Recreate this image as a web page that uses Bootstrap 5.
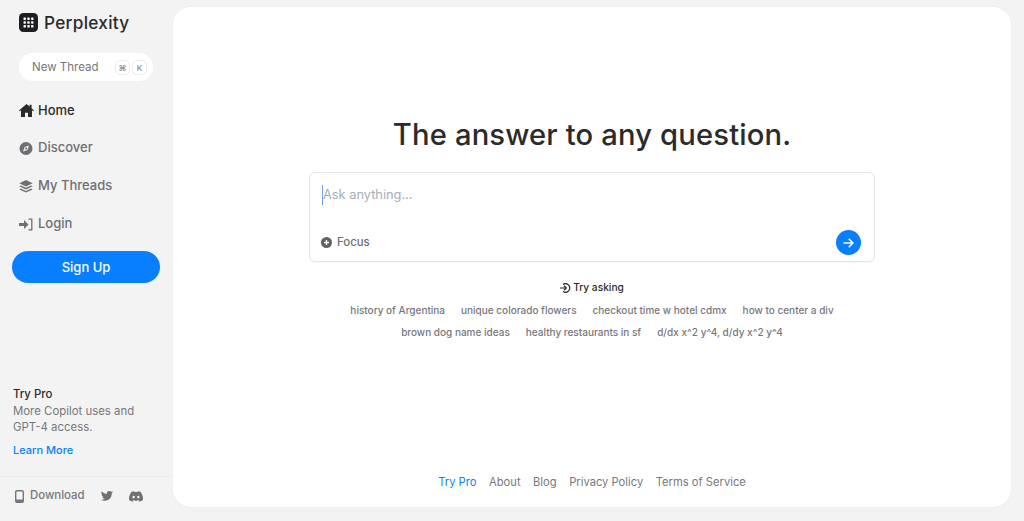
<!DOCTYPE html>
<html lang="en">
<head>
<meta charset="utf-8">
<title>Perplexity</title>
<link rel="stylesheet" href="https://cdn.jsdelivr.net/npm/bootstrap@5.3.0/dist/css/bootstrap.min.css">
<style>
html,body{height:521px;overflow:hidden}
body{background:#f3f3f3;font-family:Inter,"Noto Sans",sans-serif;color:#2b2b2b}
.shell{height:521px}
.side{width:173px;height:521px;flex:none}
.brand{height:33px;margin:6px 0 0 19px;gap:6px;font-size:17.2px;font-weight:500;color:#2a2a2a;letter-spacing:.3px}
.pill{margin:14px 0 0 19px;width:134px;height:28px;border-radius:14px;background:#fff;padding:1px 6px 0 13px;font-size:11.5px;color:#77777b}
.kbd{width:15px;height:15px;border:1px solid #ececec;border-radius:5px;font-size:8px;color:#77777b;margin-left:2px}
.navi{margin:10px 0 0 19px;gap:0}
.navi a{height:38px;gap:4px;font-size:13px;font-weight:500;color:#6f6f74;text-decoration:none}
.navi a.on{color:#2b2b2b;padding-top:1px}
.signup{margin:8px 0 0 12px;width:148px;height:32px;border-radius:16px;background:#087fff;border:0;color:#fff;font-size:13px;font-weight:500;padding:1px 0 0}
.pro{margin:auto 0 0 13px;font-size:11.4px;line-height:16px;color:#77777b}
.pro b{display:block;font-weight:500;color:#2b2b2b;margin-bottom:1px}
.pro a{display:block;margin-top:7px;font-size:11px;color:#087fff;font-weight:500;text-decoration:none}
.foot{margin-top:18px;height:45px;border-top:1px solid #ececec;padding:0 0 6px 15px;font-size:11.4px;color:#77777b;font-weight:500}
.dlicon{margin-right:5px}
.panel{width:838px;height:500px;margin:7px 0 0 0;background:#fff;border-radius:18px;box-shadow:0 0 2px rgba(0,0,0,.05)}
.hero{margin:108px 0 0;font-size:29.2px;font-weight:500;line-height:40px;color:#2b2b2b;text-align:center;letter-spacing:.15px}
.ask{width:566px;height:90px;margin:17px auto 0;border:1px solid #e4e4e4;border-radius:6px;padding:12px 13px 6px 12px;box-shadow:0 1px 2px rgba(0,0,0,.03)}
.holder{font-size:12.8px;line-height:20px;color:#a6adb8;border-left:1px solid #6f9fe6;height:20px}
.focuslbl{font-size:11.4px;color:#6f6f74;font-weight:500;gap:5px;margin-left:-1px}
.go{width:25px;height:25px;border-radius:50%;background:#087fff;border:0;padding:0}
.asking{margin-top:18px;height:16px;gap:2px;font-size:10.2px;font-weight:500;color:#2b2b2b}
.qrows{margin-top:3px}
.qrow{height:22px;gap:16px;font-size:10px;color:#77777b;font-weight:500;white-space:nowrap}
.links{margin-top:auto;margin-bottom:16px;gap:12.500px;font-size:11.2px;color:#77777b}
.links a{color:#77777b;text-decoration:none}
.links a.pr{color:#087fff}
</style>
</head>
<body>
<div class="shell d-flex">
<aside class="side d-flex flex-column">
  <div class="brand d-flex align-items-center">
    <svg width="19" height="19" viewBox="0 0 19 19"><rect width="19" height="19" rx="4.5" fill="#1e1e20"/><g fill="#fff"><rect x="4.5" y="4.5" width="2.4" height="2.4" rx=".6"/><rect x="8.3" y="4.5" width="2.4" height="2.4" rx=".6"/><rect x="12.1" y="4.5" width="2.4" height="2.4" rx=".6"/><rect x="4.5" y="8.3" width="2.4" height="2.4" rx=".6"/><rect x="8.3" y="8.3" width="2.4" height="2.4" rx=".6"/><rect x="12.1" y="8.3" width="2.4" height="2.4" rx=".6"/><rect x="4.5" y="12.1" width="2.4" height="2.4" rx=".6"/><rect x="8.3" y="12.1" width="2.4" height="2.4" rx=".6"/><rect x="12.1" y="12.1" width="2.4" height="2.4" rx=".6"/></g></svg>
    <span>Perplexity</span>
  </div>
  <div class="pill d-flex align-items-center">
    <span class="me-auto">New Thread</span>
    <span class="kbd d-flex align-items-center justify-content-center">⌘</span>
    <span class="kbd d-flex align-items-center justify-content-center">K</span>
  </div>
  <nav class="navi d-flex flex-column">
    <a href="#" class="on d-flex align-items-center"><svg width="15" height="13" viewBox="0 0 15 13"><path fill="#2b2b2b" d="M7.5 0 0 6.4l.8.9 1.2-1V13h4V8.800h3V13h4V6.300l1.200 1 .8-.9L12.600 4.300V.8h-2v1.800z"/></svg>Home</a>
    <a href="#" class="d-flex align-items-center"><svg width="15" height="13" viewBox="0 0 15 13"><circle cx="7" cy="6.500" r="6.500" fill="#6f6f74"/><path fill="#f3f3f3" d="M10 3.500 8.400 8 4 9.500 5.600 5z"/><circle cx="7" cy="6.500" r="1" fill="#6f6f74"/></svg>Discover</a>
    <a href="#" class="d-flex align-items-center"><svg width="15" height="13" viewBox="0 0 15 13"><g fill="#6f6f74"><path d="M7 0 .3 3.200 7 6.400l6.700-3.200z"/><path d="M2 5.400.3 6.300 7 9.500l6.700-3.200L12 5.400 7 7.800z"/><path d="M2 8.500l-1.700.9L7 12.600l6.700-3.200-1.700-.9-5 2.400z"/></g></svg>My Threads</a>
    <a href="#" class="d-flex align-items-center"><svg width="15" height="13" viewBox="0 0 15 13"><path fill="#6f6f74" d="M0 5h5V2l4.500 4.500L5 11V8H0z"/><path fill="none" stroke="#6f6f74" stroke-width="1.300" d="M9.500 1.200h3.300v10.600H9.500"/></svg>Login</a>
  </nav>
  <button type="button" class="btn signup">Sign Up</button>
  <div class="pro">
    <b>Try Pro</b>
    <div>More Copilot uses and<br>GPT-4 access.</div>
    <a href="#">Learn More</a>
  </div>
  <div class="foot d-flex align-items-center">
    <svg width="10" height="13" viewBox="0 0 10 13" class="dlicon"><rect x=".7" y=".7" width="7.600" height="11.600" rx="1.400" fill="none" stroke="#77777b" stroke-width="1.400"/><rect x="1" y="9.500" width="7" height="3" fill="#77777b"/></svg>
    <span>Download</span>
    <svg width="12" height="10" viewBox="0 0 24 20" class="ms-3"><path fill="#6f6f74" d="M24 2.400a10 10 0 0 1-2.800.8A5 5 0 0 0 23.300 .5a10 10 0 0 1-3.100 1.200 4.900 4.900 0 0 0-8.400 4.500A14 14 0 0 1 1.700 1a4.900 4.900 0 0 0 1.500 6.600 5 5 0 0 1-2.200-.6v.1a4.900 4.900 0 0 0 3.900 4.800 5 5 0 0 1-2.200.1 4.900 4.900 0 0 0 4.600 3.400A10 10 0 0 1 0 17.400 14 14 0 0 0 7.500 19.600c9.100 0 14-7.500 14-14v-.6A10 10 0 0 0 24 2.400z"/></svg>
    <svg width="14" height="11" viewBox="0 0 24 18" class="ms-3"><path fill="#6f6f74" fill-rule="evenodd" d="M20.300 1.500A20 20 0 0 0 15.400 0l-.6 1.300a18 18 0 0 0-5.500 0L8.600 0a20 20 0 0 0-4.900 1.500C.6 6.100-.3 10.600.1 15a20 20 0 0 0 6 3l1.300-2a13 13 0 0 1-2-1l.5-.4a14 14 0 0 0 12.200 0l.5.4a13 13 0 0 1-2 1l1.300 2a20 20 0 0 0 6-3c.5-5.100-.9-9.500-3.600-13.500zM8 12.300c-1.200 0-2.200-1.100-2.200-2.400S6.800 7.500 8 7.500s2.200 1.100 2.200 2.400-1 2.400-2.200 2.400zm8 0c-1.200 0-2.200-1.100-2.200-2.400s1-2.400 2.200-2.400 2.200 1.100 2.200 2.400-1 2.400-2.200 2.400z"/></svg>
  </div>
</aside>
<main class="panel d-flex flex-column">
  <h1 class="hero">The answer to any question.</h1>
  <div class="ask d-flex flex-column justify-content-between">
    <div class="d-flex"><div class="holder">Ask anything...</div></div>
    <div class="d-flex align-items-center justify-content-between">
      <div class="focuslbl d-flex align-items-center"><svg width="11" height="11" viewBox="0 0 11 11"><circle cx="5.500" cy="5.500" r="5.500" fill="#5f5f64"/><path d="M5.500 3v5M3 5.500h5" stroke="#fff" stroke-width="1.300"/></svg>Focus</div>
      <button type="button" class="btn go d-flex align-items-center justify-content-center" aria-label="Submit"><svg width="11" height="10" viewBox="0 0 11 10"><path d="M1 5h9M6.200 1.200 10 5 6.200 8.800" fill="none" stroke="#fff" stroke-width="1.500" stroke-linecap="round" stroke-linejoin="round"/></svg></button>
    </div>
  </div>
  <div class="asking d-flex align-items-center justify-content-center"><svg width="11" height="10" viewBox="0 0 11 10"><path d="M0 5h6M4 2.800 6.300 5 4 7.200" fill="none" stroke="#2b2b2b" stroke-width="1.200"/><path d="M3 1.400A4.300 4.300 0 1 1 3 8.600" fill="none" stroke="#2b2b2b" stroke-width="1.200"/></svg>Try asking</div>
  <div class="qrows">
    <div class="qrow d-flex align-items-center justify-content-center"><span>history of Argentina</span><span>unique colorado flowers</span><span>checkout time w hotel cdmx</span><span>how to center a div</span></div>
    <div class="qrow d-flex align-items-center justify-content-center"><span>brown dog name ideas</span><span>healthy restaurants in sf</span><span>d/dx x^2 y^4, d/dy x^2 y^4</span></div>
  </div>
  <div class="links d-flex justify-content-center"><a class="pr" href="#">Try Pro</a><a href="#">About</a><a href="#">Blog</a><a href="#">Privacy Policy</a><a href="#">Terms of Service</a></div>
</main>
</div>
<script src="https://cdn.jsdelivr.net/npm/bootstrap@5.3.0/dist/js/bootstrap.bundle.min.js"></script>
</body>
</html>
